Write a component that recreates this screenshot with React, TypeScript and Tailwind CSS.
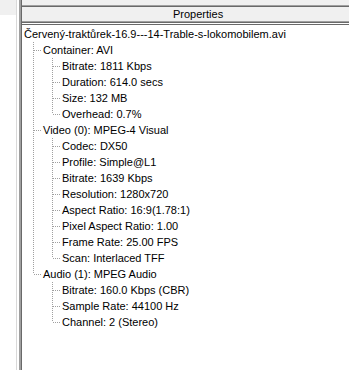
type Node = { label: string; children?: Node[] };

const tree: Node = {
  label: "Červený-traktůrek-16.9---14-Trable-s-lokomobilem.avi",
  children: [
    {
      label: "Container: AVI",
      children: [
        { label: "Bitrate: 1811 Kbps" },
        { label: "Duration: 614.0 secs" },
        { label: "Size: 132 MB" },
        { label: "Overhead: 0.7%" },
      ],
    },
    {
      label: "Video (0): MPEG-4 Visual",
      children: [
        { label: "Codec: DX50" },
        { label: "Profile: Simple@L1" },
        { label: "Bitrate: 1639 Kbps" },
        { label: "Resolution: 1280x720" },
        { label: "Aspect Ratio: 16:9(1.78:1)" },
        { label: "Pixel Aspect Ratio: 1.00" },
        { label: "Frame Rate: 25.00 FPS" },
        { label: "Scan: Interlaced TFF" },
      ],
    },
    {
      label: "Audio (1): MPEG Audio",
      children: [
        { label: "Bitrate: 160.0 Kbps (CBR)" },
        { label: "Sample Rate: 44100 Hz" },
        { label: "Channel: 2 (Stereo)" },
      ],
    },
  ],
};

type Row = { label: string; guides: boolean[]; last: boolean; depth: number };

// flatten the tree; guides[i] = ancestor at level i+1 still has siblings below
function flatten(node: Node, depth: number, guides: boolean[], last: boolean, out: Row[]) {
  out.push({ label: node.label, guides, last, depth });
  const kids = node.children ?? [];
  kids.forEach((k, i) => {
    const kidLast = i === kids.length - 1;
    const nextGuides = depth === 0 ? [] : [...guides, !last];
    flatten(k, depth + 1, nextGuides, kidLast, out);
  });
}

function Guide({ kind }: { kind: "pass" | "tee" | "end" | "none" }) {
  return (
    <svg width="19" height="16" className="shrink-0" shapeRendering="crispEdges">
      {kind === "pass" && <line x1="10.5" y1="0" x2="10.5" y2="16" stroke="#a0a0a0" strokeDasharray="1 1" />}
      {kind === "tee" && <line x1="10.5" y1="0" x2="10.5" y2="16" stroke="#a0a0a0" strokeDasharray="1 1" />}
      {kind === "end" && <line x1="10.5" y1="0" x2="10.5" y2="8" stroke="#a0a0a0" strokeDasharray="1 1" />}
      {(kind === "tee" || kind === "end") && (
        <line x1="11" y1="8.5" x2="19" y2="8.5" stroke="#a0a0a0" strokeDasharray="1 1" />
      )}
    </svg>
  );
}

export default function App() {
  const rows: Row[] = [];
  flatten(tree, 0, [], true, rows);

  return (
    <div
      className="flex h-[370px] w-[349px] overflow-hidden bg-white text-[11px] text-black"
      style={{ fontFamily: '"Liberation Sans", Arial, sans-serif' }}
    >
      {/* left pane stub */}
      <div className="flex w-[17px] shrink-0 flex-col border-r border-[#d9d9d9]">
        <div className="h-[15px] bg-[#f0f0f0]" />
        <div className="flex-1 bg-white" />
      </div>
      <div className="w-[2px] shrink-0 bg-white" />
      <div className="w-[2px] shrink-0 bg-[#a0a0a0]" />
      <div className="w-px shrink-0 bg-[#696969]" />

      {/* properties list */}
      <div className="flex min-w-0 flex-1 flex-col">
        <div className="h-[5px] bg-[#f0f0f0]" />
        <div className="h-px bg-[#a0a0a0]" />
        <div className="h-px bg-[#696969]" />
        <div className="flex h-[14px] items-center bg-[#f0f0f0] pl-[151px] leading-none">Properties</div>
        <div className="h-px bg-[#a0a0a0]" />
        <div className="h-px bg-[#696969]" />
        <div className="h-px bg-white" />
        <div className="h-px bg-[#696969]" />
        <div className="flex flex-col pt-[1px]">
          {rows.map((r, i) => (
            <div key={i} className="flex h-4 items-center pl-px">
              {r.guides.map((g, j) => (
                <Guide key={j} kind={g ? "pass" : "none"} />
              ))}
              {r.depth > 0 && <Guide kind={r.last ? "end" : "tee"} />}
              <span className="whitespace-nowrap pl-px leading-4">{r.label}</span>
            </div>
          ))}
        </div>
      </div>
    </div>
  );
}
